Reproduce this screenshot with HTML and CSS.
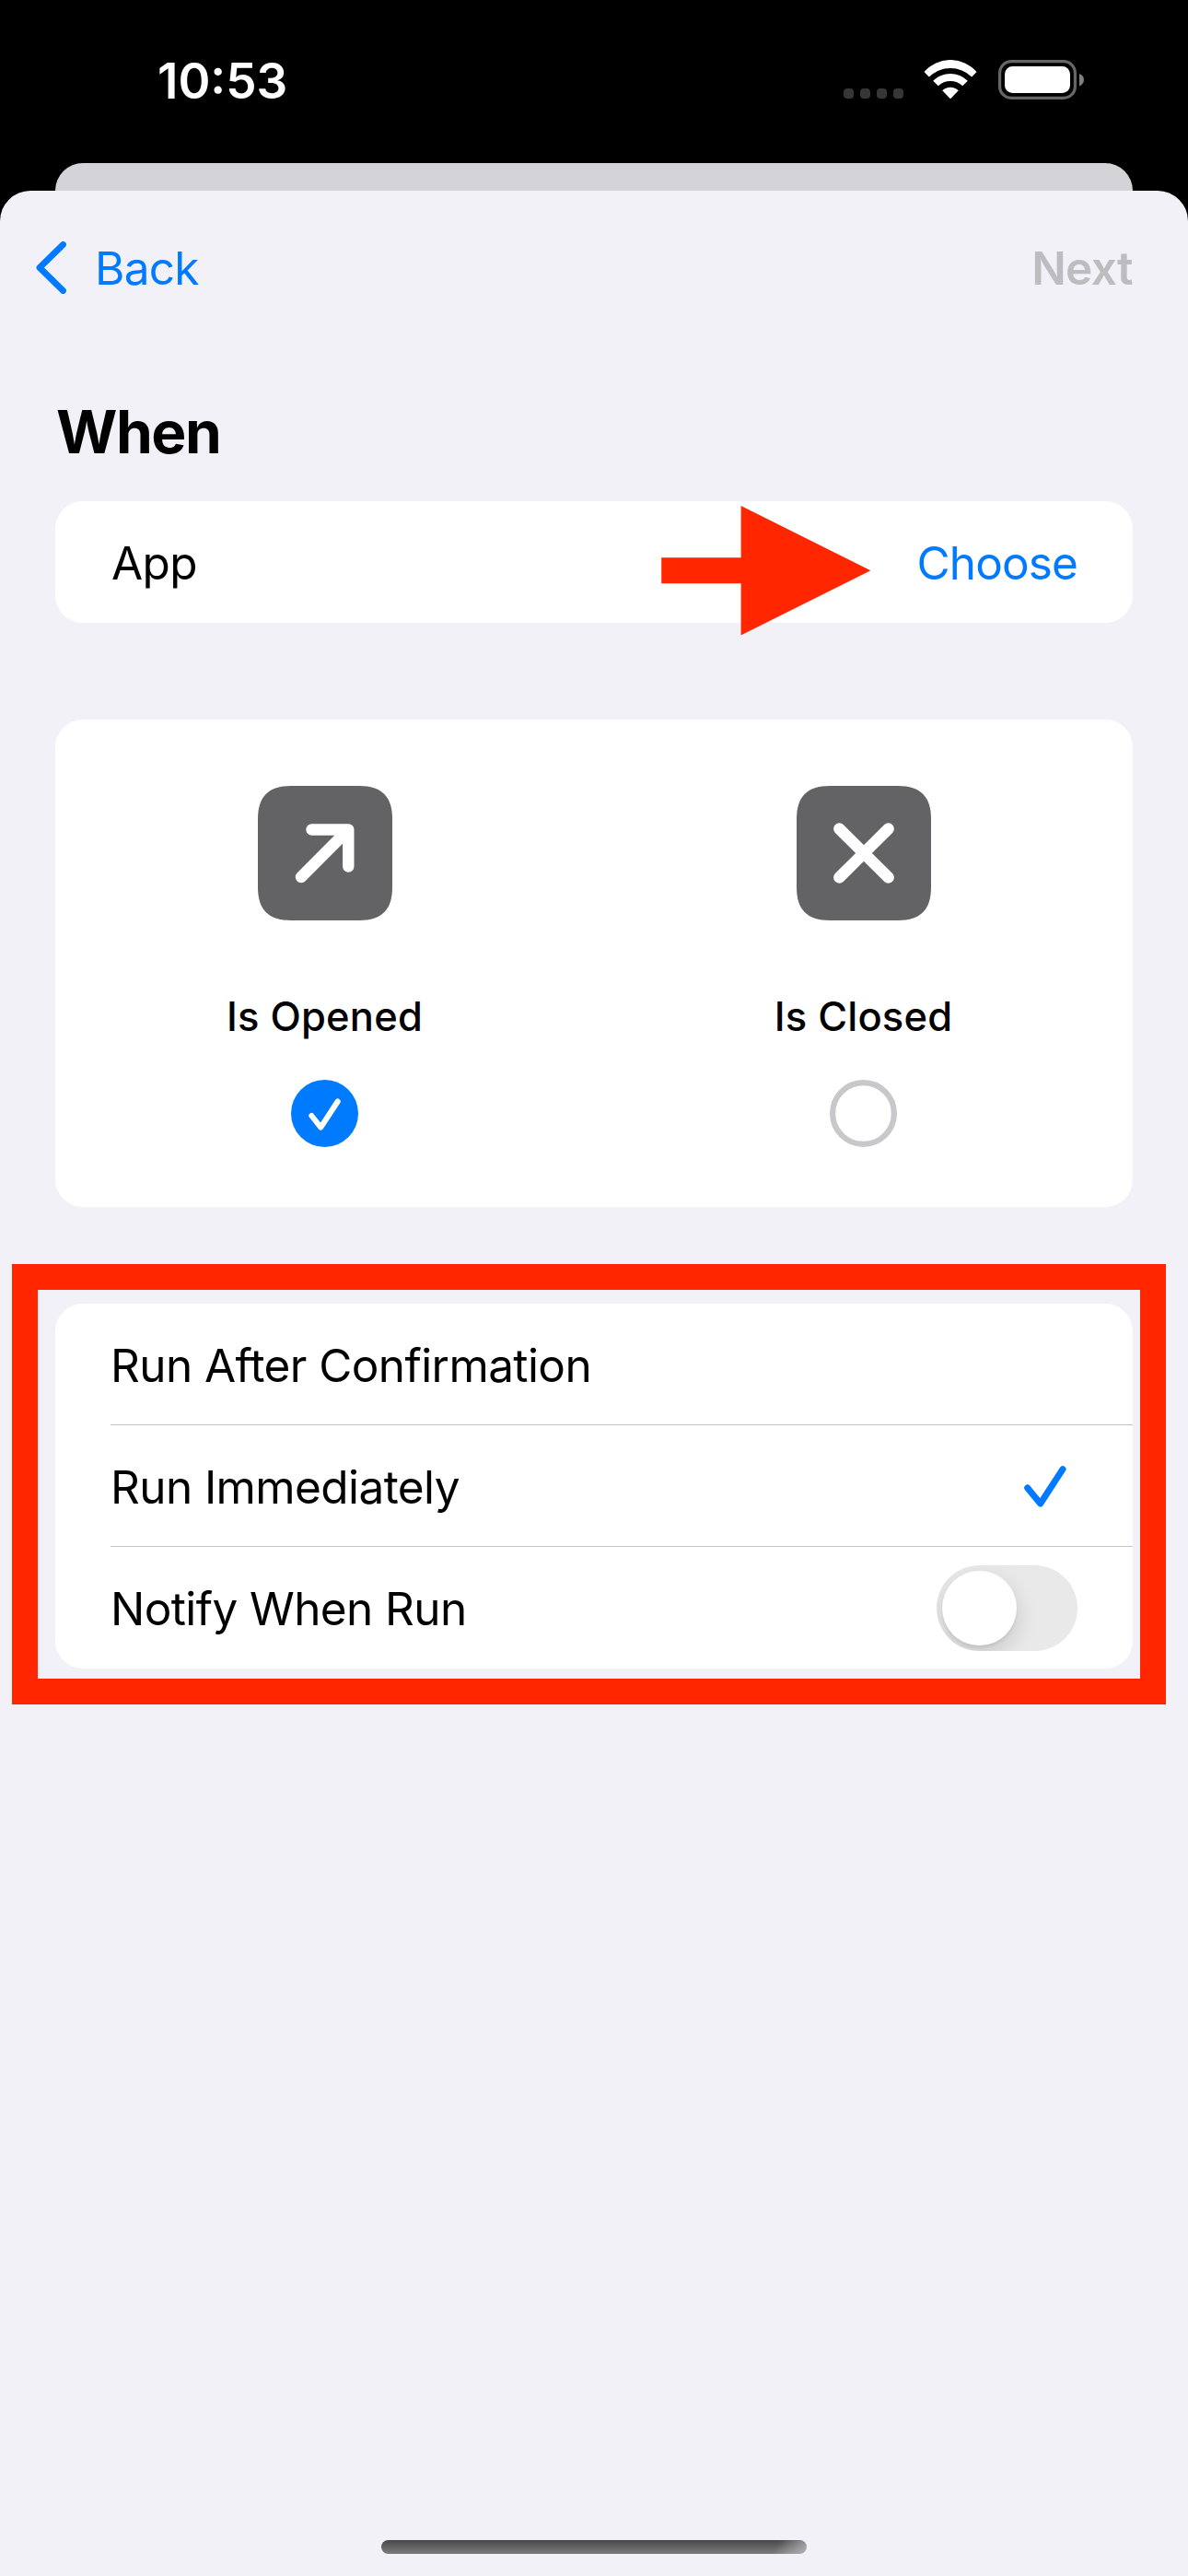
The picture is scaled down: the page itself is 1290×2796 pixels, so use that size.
FILE: index.html
```html
<!DOCTYPE html>
<html lang="en">
<head>
<meta charset="utf-8">
<title>New Automation</title>
<link rel="stylesheet" href="styles.css">
</head>
<body>
<header class="status">
  <span class="time">10:53</span>
  <div class="indicators">
    <div class="dots"><i></i><i></i><i></i><i></i></div>
    <svg class="wifi" width="58" height="43" viewBox="0 0 58 43">
      <path d="M.5 13A37.7 37.7 0 0 1 57.5 13L52.2 18.4A33.6 33.6 0 0 0 5.8 18.4Z"/>
      <path d="M10.2 22.7A26.8 26.8 0 0 1 47.8 22.7L42.2 28.3A19 19 0 0 0 15.8 28.3Z"/>
      <path d="M20.2 33.3A12.5 12.5 0 0 1 37.8 33.3L29 42.2Z"/>
    </svg>
    <svg class="battery" width="94" height="43" viewBox="0 0 94 43">
      <rect x="1.6" y="1.6" width="81.8" height="39.8" rx="12.5" fill="none" stroke="#666" stroke-width="3.2"/>
      <rect x="7" y="7" width="71" height="29" rx="8.5" fill="#fff"/>
      <path d="M88 15Q93 17 93 21.5T88 28.500Z" fill="#808080"/>
    </svg>
  </div>
</header>
<div class="sheet-behind"></div>
<main class="sheet">
  <nav class="nav">
    <a class="back">
      <svg width="33" height="57" viewBox="0 0 33 57"><path d="M29.500 3.500L4 28.500L29.500 53.500" fill="none" stroke="#007aff" stroke-width="6.800" stroke-linecap="round" stroke-linejoin="round"/></svg>
      <span>Back</span>
    </a>
    <span class="next">Next</span>
  </nav>
  <h1 class="title">When</h1>
  <section class="card app-row">
    <span class="app">App</span>
    <span class="choose">Choose</span>
    <svg class="pointer" width="228" height="141" viewBox="0 0 228 141"><path d="M.2 56.300H86.600V0L227.400 70.300L86.600 140.600V84.300H.2Z" fill="#ff2600"/></svg>
  </section>
  <section class="card options">
    <div class="option">
      <svg class="tile" viewBox="0 0 146 146"><path class="tile-bg" d="M36 0H110C135 0 146 12 146 36V110C146 134 135 146 110 146H36C11 146 0 134 0 110V36C0 12 11 0 36 0Z"/><path class="glyph" d="M58.500 47.500H98.300V87.500M98.300 47.500L47 99"/></svg>
      <span class="label">Is Opened</span>
      <svg class="radio" viewBox="0 0 73 73"><circle cx="36.500" cy="36.500" r="36.500" fill="#007aff"/><path d="M22.300 39L32.300 51.600L50.700 23.500" fill="none" stroke="#fff" stroke-width="6" stroke-linecap="round" stroke-linejoin="round"/></svg>
    </div>
    <div class="option">
      <svg class="tile" viewBox="0 0 146 146"><path class="tile-bg" d="M36 0H110C135 0 146 12 146 36V110C146 134 135 146 110 146H36C11 146 0 134 0 110V36C0 12 11 0 36 0Z"/><path class="glyph" d="M46.300 46.500L99.700 99.500M99.700 46.500L46.300 99.500"/></svg>
      <span class="label">Is Closed</span>
      <svg class="radio" viewBox="0 0 73 73"><circle cx="36.500" cy="36.500" r="33.400" fill="none" stroke="#c7c7cc" stroke-width="6.200"/></svg>
    </div>
  </section>
  <section class="card list">
    <div class="row"><span>Run After Confirmation</span></div>
    <div class="row"><span>Run Immediately</span>
      <svg class="check" width="46" height="45" viewBox="0 0 46 45"><path d="M3.700 24L17.700 41L42 3.700" fill="none" stroke="#007aff" stroke-width="7" stroke-linecap="round" stroke-linejoin="round"/></svg>
    </div>
    <div class="row"><span>Notify When Run</span><span class="toggle"><i class="knob"></i></span></div>
    <div class="highlight"></div>
  </section>
  <div class="home"></div>
</main>
</body>
</html>
```

FILE: styles.css
```css
* { box-sizing: border-box; }
body {
  margin: 0;
  width: 1290px;
  height: 2796px;
  background: #000;
  color: #000;
  font-family: Inter, "Liberation Sans", sans-serif;
  font-size: 49.5px;
  line-height: 60px;
  letter-spacing: -.6px;
  display: flex;
  flex-direction: column;
  overflow: hidden;
}
svg { display: block; flex: none; }
.status {
  height: 177px;
  padding: 0 113px 0 171px;
  display: flex;
  justify-content: space-between;
  align-items: flex-start;
}
.time {
  margin-top: 58px;
  color: #fff;
  font-size: 53px;
  font-weight: 600;
  letter-spacing: 0;
}
.indicators { display: flex; padding-top: 65px; }
.dots { display: flex; gap: 7px; margin: 31px 22px 0 0; }
.dots i { width: 11px; height: 11px; border-radius: 4px; background: #363636; }
.wifi { fill: #fff; margin-right: 23px; }
.battery { margin-right: -1px; }
.sheet-behind {
  height: 30px;
  margin: 0 60px;
  border-radius: 30px 30px 0 0;
  background: #d4d3d8;
}
.sheet {
  flex: 1;
  border-radius: 33px 33px 0 0;
  background: #f2f1f7;
  padding: 54px 60px 24px;
  display: flex;
  flex-direction: column;
}
.nav {
  height: 60px;
  margin-left: -21px;
  display: flex;
  justify-content: space-between;
  align-items: center;
}
.back { display: flex; align-items: center; gap: 31px; color: #007aff; letter-spacing: -.7px; }
.back svg { margin-top: -2px; }
.next { color: #bdbdbf; font-weight: 600; }
.title {
  margin: 108px 0 0 1px;
  height: 115px;
  font-size: 64px;
  line-height: 80px;
  font-weight: 700;
  letter-spacing: -1.5px;
}
.card { background: #fff; border-radius: 30px; position: relative; }
.app-row {
  height: 132px;
  padding: 2px 60px 0 61px;
  display: flex;
  justify-content: space-between;
  align-items: center;
}
.choose { color: #007aff; letter-spacing: -.9px; }
.pointer { position: absolute; left: 658px; top: 5px; }
.options {
  height: 529px;
  margin-top: 105px;
  padding-top: 72px;
  display: grid;
  grid-template-columns: 1fr 1fr;
}
.option { display: flex; flex-direction: column; align-items: center; }
.tile { width: 146px; height: 146px; }
.tile-bg { fill: #636366; }
.glyph { fill: none; stroke: #fff; stroke-width: 12.4; stroke-linecap: round; stroke-linejoin: round; }
.label { margin-top: 74px; font-size: 43.5px; font-weight: 500; letter-spacing: .2px; }
.radio { width: 73px; height: 73px; margin-top: 39px; }
.list { height: 396px; margin-top: 105px; }
.row {
  height: 132px;
  margin-left: 60px;
  padding: 2px 60px 0 0;
  display: flex;
  justify-content: space-between;
  align-items: center;
}
.row:nth-child(-n+2) { border-bottom: 1px solid #c6c6c8; }
.check { margin-right: 12px; }
.toggle {
  width: 153px;
  height: 93px;
  margin-top: -2px;
  padding: 6px;
  border-radius: 47px;
  background: #e9e9ea;
  overflow: hidden;
}
.knob {
  display: block;
  width: 81px;
  height: 81px;
  border-radius: 50%;
  background: #fff;
  box-shadow: 0 9px 24px rgba(0, 0, 0, .15), 0 3px 3px rgba(0, 0, 0, .06);
}
.highlight {
  position: absolute;
  left: -47px;
  top: -43px;
  width: 1253px;
  height: 478px;
  border: 28px solid #ff2600;
}
.home {
  width: 462px;
  height: 15px;
  margin: auto auto 0;
  border-radius: 8px;
  background: linear-gradient(120deg, transparent 92%, rgba(200, 200, 202, .75) 100%), linear-gradient(#484848, #7c7c7e);
}
```
